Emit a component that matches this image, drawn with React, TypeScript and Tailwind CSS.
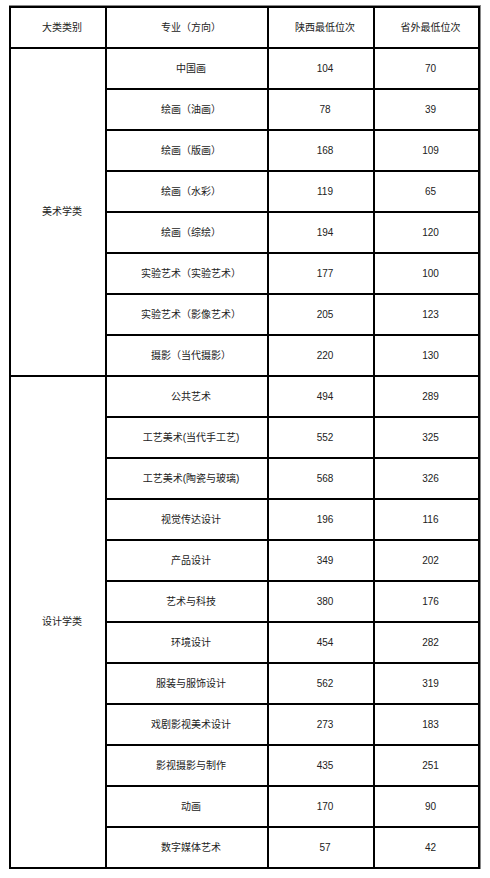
import React from "react";

const art: [string, string, string][] = [
  ["中国画", "104", "70"],
  ["绘画（油画）", "78", "39"],
  ["绘画（版画）", "168", "109"],
  ["绘画（水彩）", "119", "65"],
  ["绘画（综绘）", "194", "120"],
  ["实验艺术（实验艺术）", "177", "100"],
  ["实验艺术（影像艺术）", "205", "123"],
  ["摄影（当代摄影）", "220", "130"],
];

const design: [string, string, string][] = [
  ["公共艺术", "494", "289"],
  ["工艺美术(当代手工艺)", "552", "325"],
  ["工艺美术(陶瓷与玻璃)", "568", "326"],
  ["视觉传达设计", "196", "116"],
  ["产品设计", "349", "202"],
  ["艺术与科技", "380", "176"],
  ["环境设计", "454", "282"],
  ["服装与服饰设计", "562", "319"],
  ["戏剧影视美术设计", "273", "183"],
  ["影视摄影与制作", "435", "251"],
  ["动画", "170", "90"],
  ["数字媒体艺术", "57", "42"],
];

const cell = "bg-white flex items-center justify-center pl-[8px]";

function Rows({ rows }: { rows: [string, string, string][] }) {
  return (
    <>
      {rows.map(([a, b, c]) => (
        <React.Fragment key={a}>
          <div className={cell}>{a}</div>
          <div className={cell}>{b}</div>
          <div className={cell}>{c}</div>
        </React.Fragment>
      ))}
    </>
  );
}

export default function App() {
  return (
    <div className="bg-white w-[490px] h-[878px] pt-[5px] pl-[9px]" style={{ fontFamily: '"Liberation Sans", "Noto Sans CJK SC", sans-serif' }}>
      <div className="w-[472px] border-t border-r border-[#888]">
        <div className="grid grid-cols-[94px_160px_104px_103px] auto-rows-[39px] gap-[2px] p-[2px] bg-black text-[10px] leading-none text-[#222] w-[471px]">
          <div className={cell}>大类类别</div>
          <div className={cell}>专业（方向）</div>
          <div className={cell}>陕西最低位次</div>
          <div className={cell}>省外最低位次</div>
          <div className={`${cell} row-span-8`}>美术学类</div>
          <Rows rows={art.slice(0, 1)} />
          <Rows rows={art.slice(1)} />
          <div className={`${cell} row-span-12`}>设计学类</div>
          <Rows rows={design} />
        </div>
      </div>
    </div>
  );
}
